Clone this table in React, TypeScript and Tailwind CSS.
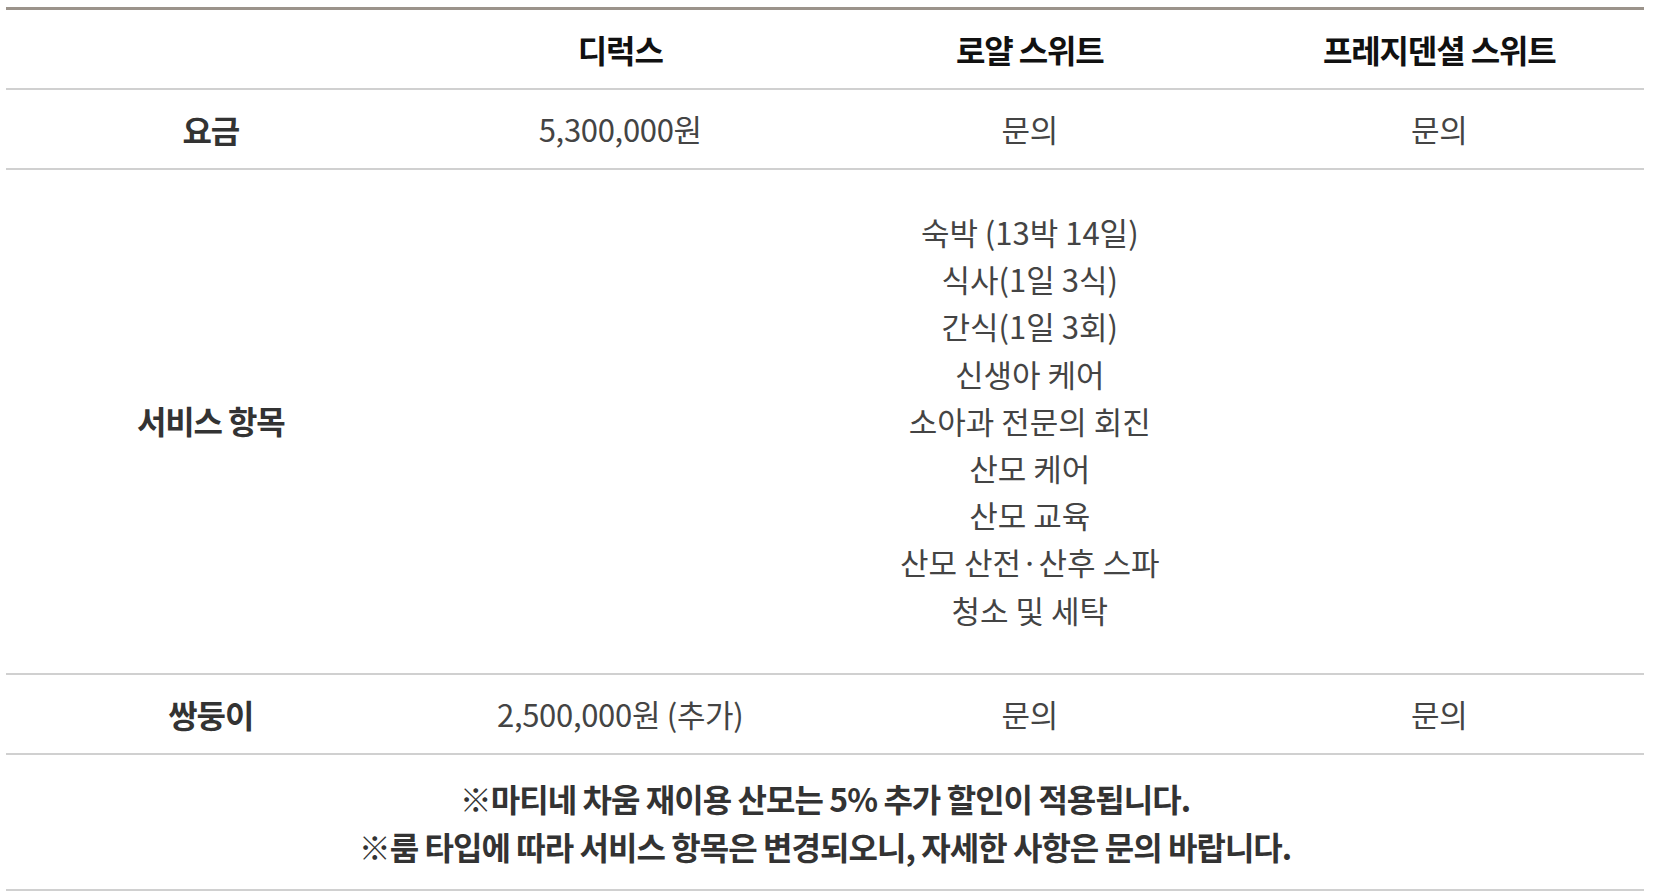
const rows = [
  { label: "요금", values: ["5,300,000원", "문의", "문의"] },
];

const services = [
  "숙박 (13박 14일)",
  "식사(1일 3식)",
  "간식(1일 3회)",
  "신생아 케어",
  "소아과 전문의 회진",
  "산모 케어",
  "산모 교육",
  "산모 산전·산후 스파",
  "청소 및 세탁",
];

const Cell = ({ children, bold = false }: { children?: React.ReactNode; bold?: boolean }) => (
  <div
    className={`flex items-center justify-center text-center ${bold ? "font-bold text-[32px] text-[#333] tracking-[-0.035em]" : "text-[#444] tracking-[-0.01em]"}`}
  >
    {children}
  </div>
);

export default function App() {
  return (
    <div
      className="bg-white pl-[6px] pr-[30px] pt-[7px] text-[31px]"
      style={{ fontFamily: '"Noto Sans CJK KR", "Noto Sans", sans-serif' }}
    >
      <div className="border-t-[3px] border-[#9b938b]">
        {/* header */}
        <div className="grid grid-cols-4 h-[80px] border-b-2 border-[#d0d0d0] font-bold text-[32px] text-[#111] tracking-[-0.035em]">
          <div />
          <div className="flex items-center justify-center">디럭스</div>
          <div className="flex items-center justify-center">로얄 스위트</div>
          <div className="flex items-center justify-center">프레지덴셜 스위트</div>
        </div>

        {rows.map((r) => (
          <div key={r.label} className="grid grid-cols-4 h-[80px] border-b-2 border-[#d0d0d0]">
            <Cell bold>{r.label}</Cell>
            {r.values.map((v, i) => (
              <Cell key={i}>{v}</Cell>
            ))}
          </div>
        ))}

        {/* services */}
        <div className="grid grid-cols-4 border-b-2 border-[#d0d0d0] pt-[38px] pb-[40px]">
          <Cell bold>서비스 항목</Cell>
          <div />
          <div className="flex flex-col items-center text-[#444] leading-[47.2px]">
            {services.map((s) => (
              <span key={s}>{s}</span>
            ))}
          </div>
          <div />
        </div>

        <div className="grid grid-cols-4 h-[80px] border-b-2 border-[#d0d0d0]">
          <Cell bold>쌍둥이</Cell>
          <Cell>2,500,000원 (추가)</Cell>
          <Cell>문의</Cell>
          <Cell>문의</Cell>
        </div>

        {/* notes */}
        <div className="flex flex-col items-center justify-center h-[136px] border-b-2 border-[#d0d0d0] font-bold text-[32px] text-[#333] tracking-[-0.03em] leading-[48px]">
          <p>※마티네 차움 재이용 산모는 5% 추가 할인이 적용됩니다.</p>
          <p>※룸 타입에 따라 서비스 항목은 변경되오니, 자세한 사항은 문의 바랍니다.</p>
        </div>
      </div>
    </div>
  );
}
